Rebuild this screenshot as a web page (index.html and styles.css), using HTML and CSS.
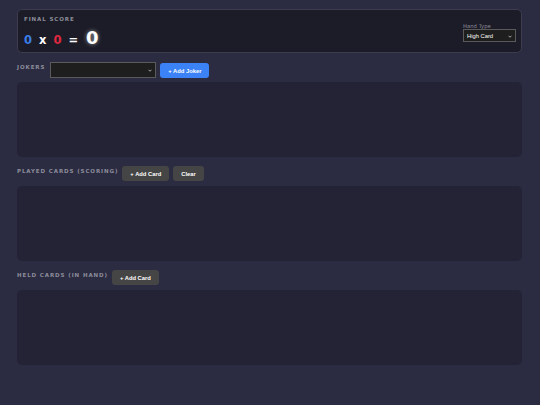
FILE: index.html
```html
<!DOCTYPE html>
<html lang="en">
<head>
    <meta charset="UTF-8">
    <meta name="viewport" content="width=device-width, initial-scale=1.0">
    <title>Hand Calculator</title>
    <link rel="stylesheet" href="styles.css">
</head>
<body>
    <div class="container">
        <div class="score-panel">
            <div class="score-left">
                <div class="score-title">FINAL SCORE</div>
                <div class="score-line">
                    <span class="chips">0</span>
                    <span class="op">x</span>
                    <span class="mult">0</span>
                    <span class="op">=</span>
                    <span class="total">0</span>
                </div>
            </div>
            <div class="hand-type">
                <label for="handType">Hand Type</label>
                <div class="select-wrap small">
                    <select id="handType">
                        <option>High Card</option>
                    </select>
                    <svg class="chevron" viewBox="0 0 8 5"><path d="M1 1l3 3 3-3" fill="none" stroke="#ddd" stroke-width="1.4"/></svg>
                </div>
            </div>
        </div>

        <div class="section">
            <div class="section-head">
                <h3>JOKERS</h3>
                <div class="select-wrap joker">
                    <select id="jokerSelect"></select>
                    <svg class="chevron" viewBox="0 0 8 5"><path d="M1 1l3 3 3-3" fill="none" stroke="#ddd" stroke-width="1.4"/></svg>
                </div>
                <button class="btn-blue">+ Add Joker</button>
            </div>
            <div class="card-area"></div>
        </div>

        <div class="section">
            <div class="section-head">
                <h3>PLAYED CARDS (SCORING)</h3>
                <button>+ Add Card</button>
                <button>Clear</button>
            </div>
            <div class="card-area"></div>
        </div>

        <div class="section">
            <div class="section-head">
                <h3>HELD CARDS (IN HAND)</h3>
                <button>+ Add Card</button>
            </div>
            <div class="card-area"></div>
        </div>
    </div>
</body>
</html>
```

FILE: styles.css
```css
* {
    box-sizing: border-box;
}

body {
    margin: 0;
    padding: 9px 18px 0 17px;
    font-family: "DejaVu Sans", Verdana, sans-serif;
    min-height: 100vh;
    background-color: #2b2b42;
    color: #fff;
}

.container {
    display: flex;
    flex-direction: column;
}

.score-panel {
    display: flex;
    justify-content: space-between;
    align-items: flex-start;
    height: 44px;
    padding: 6px 5px 0 6px;
    background-color: #1c1c28;
    border: 1px solid #3c3c4e;
    border-radius: 5px;
}

.score-title {
    font-size: 5.5px;
    font-weight: bold;
    letter-spacing: 0.9px;
    color: #8c8c99;
    line-height: 7px;
}

.score-line {
    display: flex;
    align-items: baseline;
    gap: 7px;
    font-weight: bold;
    font-size: 11.5px;
    line-height: 18px;
    margin-top: 6px;
}

.chips {
    color: #3b7ee8;
}

.mult {
    color: #e0283f;
}

.op {
    color: #fff;
}

.total {
    font-size: 18px;
    color: #fff;
    margin-left: 1px;
    text-shadow: 0 0 4px rgba(255, 255, 255, 0.55);
}

.hand-type {
    display: flex;
    flex-direction: column;
    margin-top: 7px;
}

.hand-type label {
    font-size: 5.3px;
    color: #8c8c99;
    line-height: 6px;
}

.select-wrap {
    position: relative;
}

.select-wrap select {
    display: block;
    width: 100%;
    height: 100%;
    appearance: none;
    -webkit-appearance: none;
    background-color: #1e1e1e;
    color: #fff;
    border: 1px solid #5a5a5a;
    border-radius: 0;
    font-family: "Liberation Sans", Arial, sans-serif;
    font-size: 5.8px;
    padding: 0 0 0 3px;
    outline: none;
}

.chevron {
    position: absolute;
    top: 50%;
    right: 4px;
    width: 4px;
    height: 3px;
    margin-top: -1px;
    pointer-events: none;
}

.select-wrap.small {
    width: 53px;
    height: 13px;
}

.select-wrap.joker {
    width: 106px;
    height: 16px;
    margin-left: 1px;
}

.section {
    margin-top: 9px;
}

.section-head {
    display: flex;
    align-items: flex-start;
    gap: 4px;
    height: 16px;
    margin-bottom: 4px;
}

.section-head h3 {
    margin: 0;
    padding-top: 1px;
    font-size: 5.5px;
    line-height: 8px;
    letter-spacing: 0.9px;
    color: #8c8c99;
}

button {
    height: 15px;
    padding: 0 8px;
    background-color: #454545;
    color: #fff;
    border: none;
    border-radius: 3px;
    font-family: "Liberation Sans", Arial, sans-serif;
    font-size: 5.8px;
    font-weight: bold;
    cursor: pointer;
}

.btn-blue {
    background-color: #3b82f6;
    margin-top: 1px;
}

.card-area {
    height: 75px;
    background-color: #232335;
    border-radius: 5px;
}
```
